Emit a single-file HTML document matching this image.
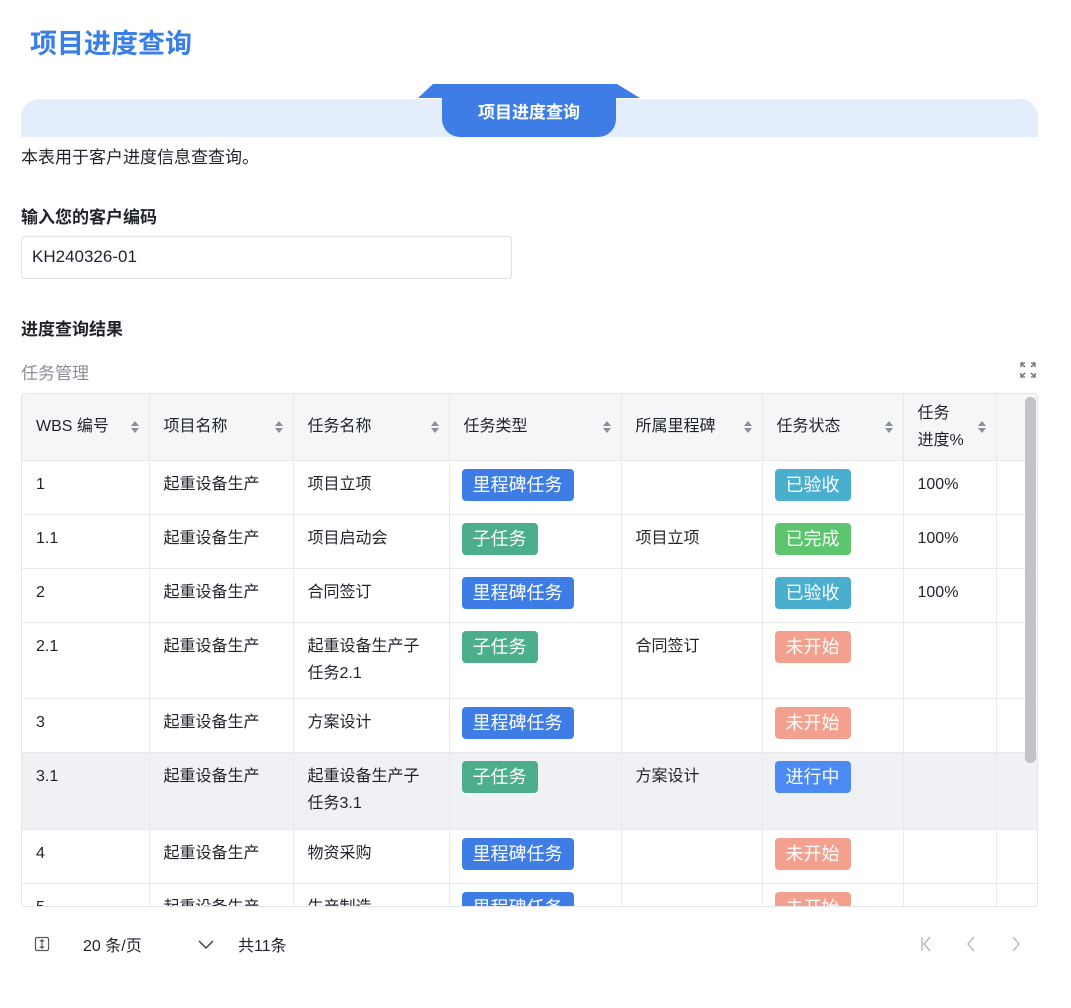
<!DOCTYPE html>
<html><head><meta charset="utf-8">
<style>
*{box-sizing:border-box;margin:0;padding:0}
body{width:1071px;height:1008px;background:#fff;font-family:"Liberation Sans","Noto Sans CJK SC",sans-serif;color:#1f2329;position:relative;overflow:hidden;font-size:16px}
.abs{position:absolute}
.tag{display:inline-block;height:32px;line-height:32px;padding:0 11px;border-radius:4px;color:#fff;font-size:18px;margin-top:-2px;margin-left:-2px}
.b{background:#3f7de6}.g{background:#4dae8b}.c{background:#4aaece}.d{background:#5cc56d}.o{background:#f3a18e}.p{background:#4b8bf3}
table{border-collapse:collapse;table-layout:fixed;position:absolute;left:0;top:0}
td,th{border-right:1px solid #e8e9eb;border-bottom:1px solid #e8e9eb;padding:10px 16px 0 14px;vertical-align:top;line-height:27px;font-weight:normal;text-align:left}
th{background:#f5f6f8;height:66px;vertical-align:middle;padding-top:0;position:relative}
th .s{position:absolute;right:10px;top:26px;width:8px;height:14px}
tr.gr td{background:#f0f1f4}
</style></head><body>
<div class="abs" style="left:30px;top:22px;font-size:27px;font-weight:bold;color:#3a7ee8">项目进度查询</div>
<div class="abs" style="left:21px;top:99px;width:1017px;height:38px;background:#e3edfc;border-radius:18px 18px 0 0"></div>
<svg class="abs" style="left:417px;top:84px" width="224" height="54"><polygon points="1,14 16,0 200,0 223,14" fill="#3f7de6"/><path d="M25,13 H199 V35 a18,18 0 0 1 -18,18 H43 a18,18 0 0 1 -18,-18 Z" fill="#3f7de6"/></svg>
<div class="abs" style="left:442px;top:98px;width:174px;text-align:center;color:#fff;font-size:17px;font-weight:bold">项目进度查询</div>
<div class="abs" style="left:21px;top:143px;font-size:17px">本表用于客户进度信息查查询。</div>
<div class="abs" style="left:21px;top:203px;font-size:17px;font-weight:bold">输入您的客户编码</div>
<div class="abs" style="left:21px;top:236px;width:491px;height:43px;border:1px solid #dcdfe3;border-radius:4px;padding:10px 0 0 10px;font-size:17px">KH240326-01</div>
<div class="abs" style="left:21px;top:315px;font-size:17px;font-weight:bold">进度查询结果</div>
<div class="abs" style="left:21px;top:359px;font-size:17px;color:#8a8f99">任务管理</div>
<svg class="abs" style="left:1020px;top:362px" width="16" height="16" fill="none" stroke="#666" stroke-width="1.3"><path d="M1,5V1H5M2,2L5,5M11,1H15V5M14,2L11,5M1,11V15H5M2,14L5,11M11,15H15V11M14,14L11,11"/></svg>
<div class="abs" style="left:21px;top:393px;width:1017px;height:514px;border:1px solid #e3e5e8;border-radius:4px;overflow:hidden">
<table style="width:1016px">
<colgroup><col style="width:127px"><col style="width:144px"><col style="width:156px"><col style="width:172px"><col style="width:141px"><col style="width:141px"><col style="width:93px"><col style="width:42px"></colgroup>
<tr><th>WBS 编号<svg class="s" viewBox="0 0 8 14"><path d="M0,6 4,1 8,6Z M0,8 4,13 8,8Z" fill="#8a8f99"/></svg></th><th>项目名称<svg class="s" viewBox="0 0 8 14"><path d="M0,6 4,1 8,6Z M0,8 4,13 8,8Z" fill="#8a8f99"/></svg></th><th>任务名称<svg class="s" viewBox="0 0 8 14"><path d="M0,6 4,1 8,6Z M0,8 4,13 8,8Z" fill="#8a8f99"/></svg></th><th>任务类型<svg class="s" viewBox="0 0 8 14"><path d="M0,6 4,1 8,6Z M0,8 4,13 8,8Z" fill="#8a8f99"/></svg></th><th>所属里程碑<svg class="s" viewBox="0 0 8 14"><path d="M0,6 4,1 8,6Z M0,8 4,13 8,8Z" fill="#8a8f99"/></svg></th><th>任务状态<svg class="s" viewBox="0 0 8 14"><path d="M0,6 4,1 8,6Z M0,8 4,13 8,8Z" fill="#8a8f99"/></svg></th><th>任务<br>进度%<svg class="s" viewBox="0 0 8 14"><path d="M0,6 4,1 8,6Z M0,8 4,13 8,8Z" fill="#8a8f99"/></svg></th><th></th></tr>
<tr style="height:54px"><td>1</td><td>起重设备生产</td><td>项目立项</td><td><span class="tag b">里程碑任务</span></td><td></td><td><span class="tag c">已验收</span></td><td>100%</td><td></td></tr>
<tr style="height:54px"><td>1.1</td><td>起重设备生产</td><td>项目启动会</td><td><span class="tag g">子任务</span></td><td>项目立项</td><td><span class="tag d">已完成</span></td><td>100%</td><td></td></tr>
<tr style="height:54px"><td>2</td><td>起重设备生产</td><td>合同签订</td><td><span class="tag b">里程碑任务</span></td><td></td><td><span class="tag c">已验收</span></td><td>100%</td><td></td></tr>
<tr style="height:76px"><td>2.1</td><td>起重设备生产</td><td>起重设备生产子任务2.1</td><td><span class="tag g">子任务</span></td><td>合同签订</td><td><span class="tag o">未开始</span></td><td></td><td></td></tr>
<tr style="height:54px"><td>3</td><td>起重设备生产</td><td>方案设计</td><td><span class="tag b">里程碑任务</span></td><td></td><td><span class="tag o">未开始</span></td><td></td><td></td></tr>
<tr class="gr" style="height:77px"><td>3.1</td><td>起重设备生产</td><td>起重设备生产子任务3.1</td><td><span class="tag g">子任务</span></td><td>方案设计</td><td><span class="tag p">进行中</span></td><td></td><td></td></tr>
<tr style="height:54px"><td>4</td><td>起重设备生产</td><td>物资采购</td><td><span class="tag b">里程碑任务</span></td><td></td><td><span class="tag o">未开始</span></td><td></td><td></td></tr>
<tr style="height:54px"><td>5</td><td>起重设备生产</td><td>生产制造</td><td><span class="tag b">里程碑任务</span></td><td></td><td><span class="tag o">未开始</span></td><td></td><td></td></tr>
</table>
<div class="abs" style="left:1003px;top:3px;width:11px;height:366px;background:#c1c3c7;border-radius:6px"></div>
</div>
<svg class="abs" style="left:34px;top:936px" width="16" height="16" fill="none" stroke="#555" stroke-width="1.2"><rect x="1.5" y="1.5" width="13" height="13" rx="1.5"/><path d="M8,4V12M6,5.5 8,3.8 10,5.5M6,10.5 8,12.2 10,10.5"/></svg>
<div class="abs" style="left:83px;top:932px;font-size:16px">20 条/页</div>
<svg class="abs" style="left:197px;top:939px" width="18" height="12" fill="none" stroke="#444" stroke-width="1.5"><path d="M2,2 9,9 16,2"/></svg>
<div class="abs" style="left:238px;top:932px;font-size:16px">共11条</div>
<svg class="abs" style="left:918px;top:935px" width="110" height="18" fill="none" stroke="#b5b8bd" stroke-width="1.4"><path d="M4,2V16M12,2 6,9 12,16M56,2 50,9 56,16M95,2 101,9 95,16"/></svg>
</body></html>
